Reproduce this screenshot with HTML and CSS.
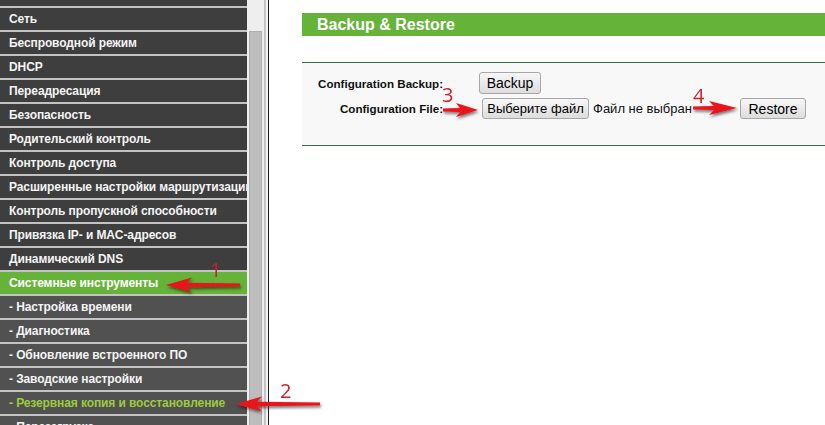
FILE: index.html
```html
<!DOCTYPE html>
<html lang="ru">
<head>
<meta charset="utf-8">
<title>Backup &amp; Restore</title>
<link rel="stylesheet" href="styles.css">
</head>
<body>
<div class="page">
  <nav class="menu">
    <div class="stub"></div>
    <div class="item">Сеть</div>
    <div class="item">Беспроводной режим</div>
    <div class="item">DHCP</div>
    <div class="item">Переадресация</div>
    <div class="item">Безопасность</div>
    <div class="item">Родительский контроль</div>
    <div class="item">Контроль доступа</div>
    <div class="item">Расширенные настройки маршрутизации</div>
    <div class="item">Контроль пропускной способности</div>
    <div class="item">Привязка IP- и MAC-адресов</div>
    <div class="item">Динамический DNS</div>
    <div class="item active">Системные инструменты</div>
    <div class="item sub">- Настройка времени</div>
    <div class="item sub">- Диагностика</div>
    <div class="item sub">- Обновление встроенного ПО</div>
    <div class="item sub">- Заводские настройки</div>
    <div class="item sub current">- Резервная копия и восстановление</div>
    <div class="item sub">- Перезагрузка</div>
  </nav>
  <div class="scroll">
    <div class="track"><div class="thumb"></div></div>
    <div class="edge1"></div>
    <div class="edge2"></div>
  </div>
  <main class="content">
    <div class="title">Backup &amp; Restore</div>
    <div class="form">
      <div class="row">
        <span class="label">Configuration Backup:</span>
        <button class="btn b-backup">Backup</button>
      </div>
      <div class="row">
        <span class="label">Configuration File:</span>
        <div class="filebox">
          <button class="btn b-file">Выберите файл</button>
          <span class="fname">Файл не выбран</span>
        </div>
        <button class="btn b-restore">Restore</button>
      </div>
    </div>
  </main>
</div>
<svg class="notes" width="825" height="425" viewBox="0 0 825 425">
  <defs>
    <filter id="sh" x="-20%" y="-50%" width="140%" height="200%">
      <feDropShadow dx="1" dy="2" stdDeviation="1.4" flood-color="#000" flood-opacity="0.55"/>
    </filter>
  </defs>
  <g fill="#e8141a" filter="url(#sh)">
    <path transform="translate(166,285) scale(-1,1)" d="M0,0 L-26,-7.5 L-21,-2.2 L-74,-1.6 L-74,1.6 L-21,2.2 L-26,7.5 Z"/>
    <path transform="translate(236,404) scale(-1,1)" d="M0,0 L-26,-7.5 L-21,-2.2 L-84,-1.6 L-84,1.6 L-21,2.2 L-26,7.5 Z"/>
    <path transform="translate(478,110)" d="M0,0 L-22,-7 L-18,-2 L-35,-1.4 L-35,1.4 L-18,2 L-22,7 Z"/>
    <path transform="translate(737,108)" d="M0,0 L-28,-7 L-23,-2 L-44,-1.4 L-44,1.4 L-23,2 L-28,7 Z"/>
  </g>
  <g class="num">
    <text x="210" y="277">1</text>
    <text x="280" y="398">2</text>
    <text x="442" y="102">3</text>
    <text x="693" y="103">4</text>
  </g>
</svg>
</body>
</html>
```
FILE: styles.css
```css
html, body {
  margin: 0;
  padding: 0;
  width: 825px;
  height: 425px;
  overflow: hidden;
  background: #ffffff;
  font-family: "Liberation Sans", Arial, sans-serif;
}

.page {
  display: flex;
  height: 425px;
  overflow: hidden;
}

.menu {
  width: 247px;
  flex: none;
  display: flex;
  flex-direction: column;
}

.stub {
  flex: none;
  height: 6px;
  background: #3e3e3e;
}

.item {
  flex: none;
  height: 22px;
  line-height: 22px;
  border-top: 2px solid #c3c3c3;
  background: #3e3e3e;
  color: #f4f4f4;
  font-size: 12px;
  font-weight: bold;
  padding-left: 9px;
  white-space: nowrap;
  overflow: hidden;
  letter-spacing: -0.1px;
}

.item.sub {
  background: #515151;
}

.item.active {
  background: #66b33a;
  color: #ffffff;
}

.item.current {
  color: #9ccc3c;
}

.scroll {
  width: 22px;
  flex: none;
  display: flex;
  border-right: 1px solid #1e1e1e;
  box-sizing: border-box;
}

.track {
  width: 17px;
  background: #eeeeee;
  padding: 31px 2px 0;
  box-sizing: border-box;
}

.thumb {
  height: 400px;
  background: #bdbdbd;
  border: 1px solid #b0b0b0;
  box-sizing: border-box;
}

.edge1 {
  width: 2px;
  background: #c4c4c4;
}

.edge2 {
  width: 2px;
  background: #f5f5f5;
}

.content {
  flex: 1;
  padding: 13px 0 0 33px;
  display: flex;
  flex-direction: column;
}

.title {
  height: 23px;
  line-height: 23px;
  background: #66b33a;
  color: #ffffff;
  font-size: 16px;
  font-weight: bold;
  padding-left: 15px;
}

.form {
  margin-top: 26px;
  border-top: 1px solid #2f6e4c;
  border-bottom: 1px solid #2f6e4c;
  background: #f8f8f8;
  padding: 9px 0 26px;
  display: flex;
  flex-direction: column;
  gap: 4px;
}

.row {
  display: flex;
  align-items: center;
}

.label {
  width: 141px;
  text-align: right;
  font-size: 11.6px;
  font-weight: bold;
  color: #111;
  margin-right: 36px;
}

.btn {
  font-family: "Liberation Sans", Arial, sans-serif;
  font-size: 14px;
  color: #000;
  background: linear-gradient(#f7f7f7, #dddddd);
  border: 1px solid #a8a8a8;
  border-radius: 3px;
  padding: 0;
  margin: 0;
  box-sizing: border-box;
}

.b-backup {
  width: 62px;
  height: 22px;
}

.filebox {
  width: 258px;
  margin-left: 3px;
  display: flex;
  align-items: center;
}

.b-file {
  width: 107px;
  height: 21px;
  font-size: 13px;
}

.fname {
  margin-left: 4px;
  font-size: 13px;
  color: #111;
}

.b-restore {
  width: 66px;
  height: 21px;
}

.notes {
  position: absolute;
  left: 0;
  top: 0;
  pointer-events: none;
}

.num text {
  font-family: "Open Sans", "Liberation Sans", sans-serif;
  font-weight: 400;
  font-size: 20px;
  fill: #cc1f27;
}
```
